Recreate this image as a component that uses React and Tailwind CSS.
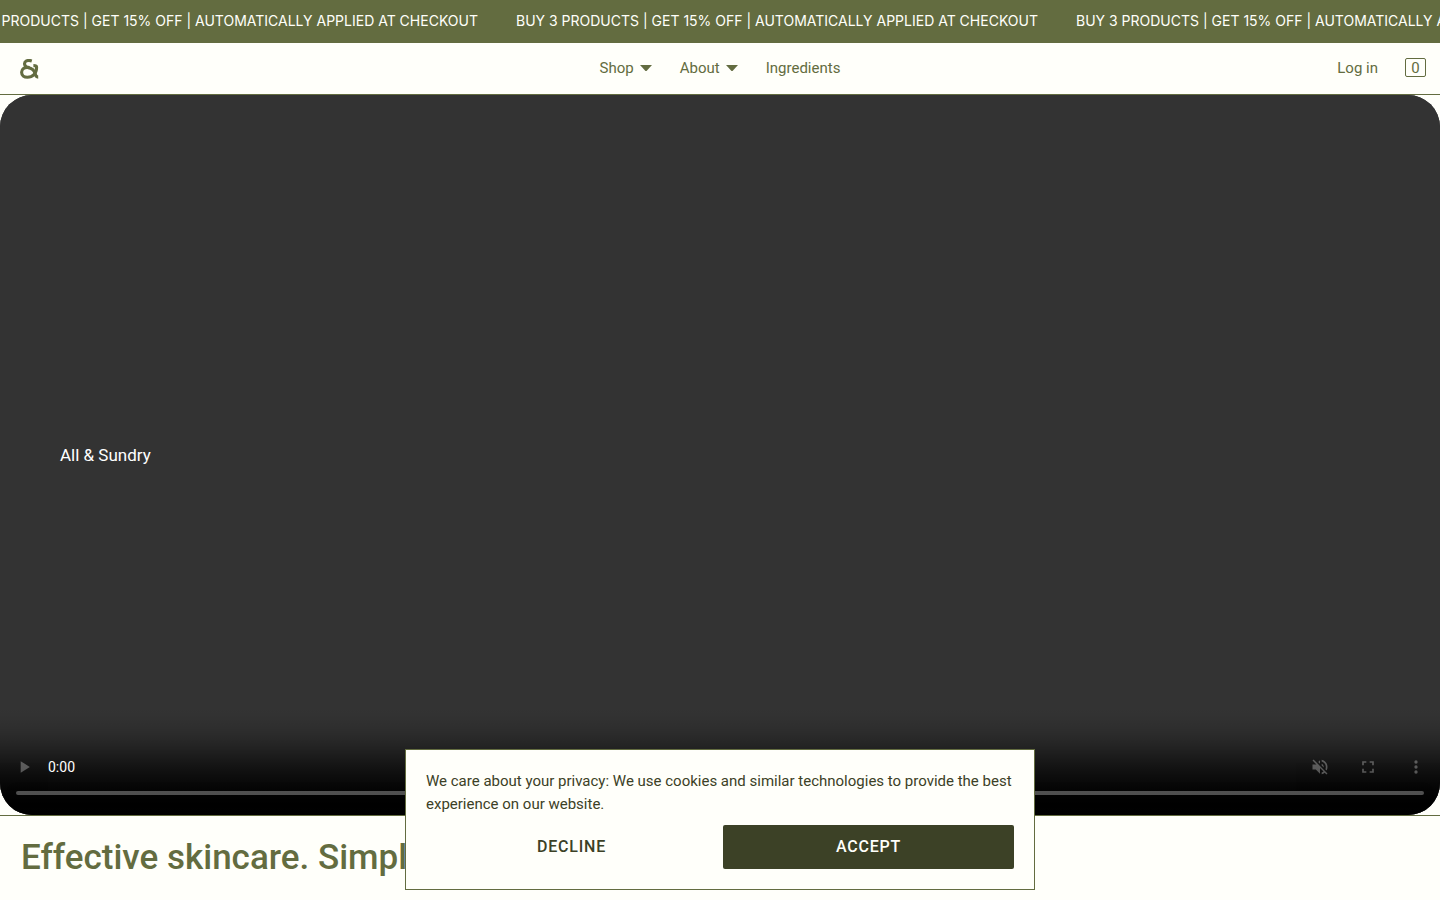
// Storefront landing page
import { useState } from 'react';

const PROMO = 'BUY 3 PRODUCTS | GET 15% OFF | AUTOMATICALLY APPLIED AT CHECKOUT';

function PromoBar() {
  return (
    <div className="flex h-[43px] items-center overflow-hidden bg-[#636c40] pb-[2px] text-[#fffffa]">
      <div className="-ml-11 flex shrink-0 gap-[38px] font-['Inter',Arial,sans-serif] text-[14px] leading-5 whitespace-nowrap">
        {[0, 1, 2].map((i) => (
          <span key={i} aria-hidden={i > 0}>{PROMO}</span>
        ))}
      </div>
    </div>
  );
}

function Caret() {
  return (
    <svg viewBox="0 0 12 6" className="h-[6px] w-3 fill-current" aria-hidden="true">
      <path d="M0 0h12L7 5.4Q6 6.4 5 5.4Z" />
    </svg>
  );
}

function Header() {
  return (
    <header className="grid h-[52px] grid-cols-[1fr_auto_1fr] items-center border-b border-[#636c40] text-[15px] leading-5 text-[#636c40]">
      <a href="#home" aria-label="All & Sundry" className="ml-5 justify-self-start">
        <svg viewBox="0 0 19 20" className="h-5 w-[19px] fill-none stroke-current" strokeWidth="3.1" aria-hidden="true">
          <path d="M11.8 1.9C7.4.6 4.2 2.3 4.6 5.2c.3 2.2 2.4 3.2 5 3.4" />
          <path d="M8.8 8.6C4.2 7.8 1.6 10.4 1.6 13.2c0 3.2 2.5 5.1 5.8 5.1 5.4 0 9.2-4.2 9.2-10 0-1.2-.4-1.7-3.2-1.7" />
          <path d="M8 8.5c4 .8 6.4 3 7.2 6.4.5 2.2 1.1 3.2 3 3.2" />
        </svg>
      </a>
      <nav className="flex items-center justify-center gap-7 pb-[2px]">
        <button type="button" className="flex items-center gap-[6px]">Shop <Caret /></button>
        <button type="button" className="flex items-center gap-[6px]">About <Caret /></button>
        <a href="#ingredients">Ingredients</a>
      </nav>
      <div className="flex items-center justify-end gap-[27px] pr-[14px] pb-[2px]">
        <a href="#login">Log in</a>
        <a href="#cart" aria-label="Cart" className="flex h-[19px] w-[21px] items-center justify-center rounded-xs border border-[#636c40]">0</a>
      </div>
    </header>
  );
}

function Hero() {
  return (
    <section className="relative border-b border-[#636c40]">
      <video controls muted className="h-[80vh] w-full rounded-[32px] bg-[#333333]" />
      <p className="pointer-events-none absolute inset-y-0 left-[60px] flex items-center text-[17px] leading-6 text-white">
        All &amp; Sundry
      </p>
    </section>
  );
}

function CookieBanner({ onClose }) {
  return (
    <div
      role="dialog"
      aria-label="Cookies"
      className="fixed inset-x-0 bottom-[10px] mx-auto w-full max-w-[630px] border border-[#636c40] bg-[#fffffa] p-5 text-[#3c4126]"
    >
      <p className="text-[15px] leading-[23px]">
        We care about your privacy: We use cookies and similar technologies to provide the best experience on our website.
      </p>
      <div className="mt-[9px] grid grid-cols-2 gap-[6px] text-base font-medium tracking-wider">
        <button type="button" onClick={onClose} className="h-11 rounded-xs">DECLINE</button>
        <button type="button" onClick={onClose} className="h-11 rounded-xs bg-[#3c4126] text-[#fffffa]">ACCEPT</button>
      </div>
    </div>
  );
}

export default function App() {
  const [showCookies, setShowCookies] = useState(true);

  return (
    <div className="min-h-screen bg-[#fffffa] font-['Roboto',Arial,sans-serif]">
      <PromoBar />
      <Header />
      <Hero />
      <h1 className="px-[21px] py-5 text-[35px] leading-[44px] font-medium text-[#636c40]">
        Effective skincare. Simplified.
      </h1>
      {showCookies && <CookieBanner onClose={() => setShowCookies(false)} />}
    </div>
  );
}
